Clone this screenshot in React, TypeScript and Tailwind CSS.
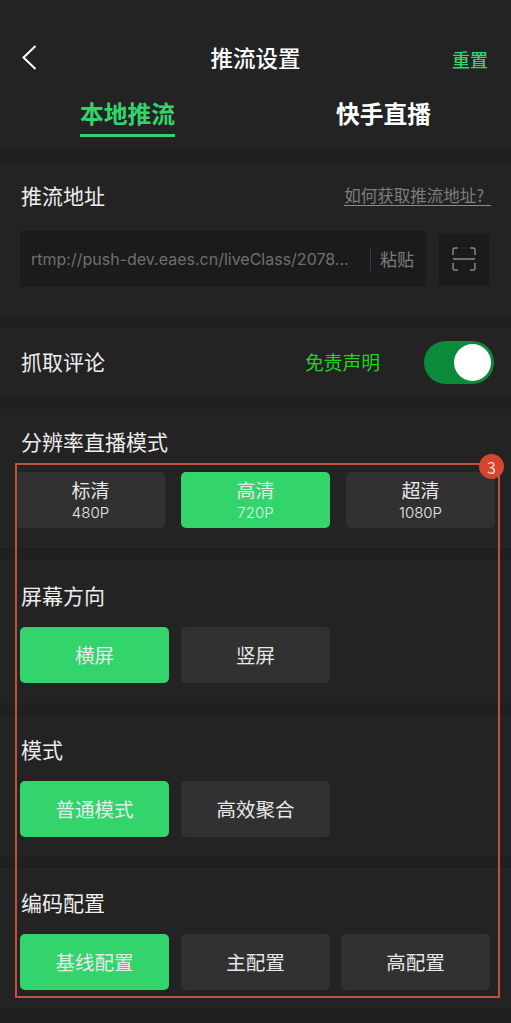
import React from 'react';

const cjk = "font-['Noto_Sans_CJK_SC',sans-serif]";
const latin = "font-['Inter','Noto_Sans_CJK_SC',sans-serif]";

const Opt = ({ label, sub, on, className = '' }: { label: string; sub?: string; on?: boolean; className?: string }) => (
  <div
    className={`flex h-14 w-[149px] flex-col items-center justify-center rounded-[5px] text-[#e8e8e8] ${on ? 'bg-[#33d46c]' : 'bg-[#313131]'} ${className}`}
  >
    <div className={sub ? 'text-[19px] leading-[25px]' : 'text-[19.5px] leading-[26px]'}>{label}</div>
    {sub && <div className={`text-[15px] leading-[22px] font-light ${latin}`}>{sub}</div>}
  </div>
);

const Section = ({ title, height, head, children }: { title: string; height: string; head: string; children: React.ReactNode }) => (
  <section className={`bg-[#232323] ${height}`}>
    <h2 className={`pl-[21px] text-[21px] leading-[28px] font-normal text-[#eeeeee] ${head}`}>{title}</h2>
    {children}
  </section>
);

export default function App() {
  return (
    <div className={`relative flex h-[1023px] w-[511px] flex-col gap-3 overflow-hidden bg-[#202020] ${cjk}`}>
      {/* 顶部 */}
      <header className="h-[150px] shrink-0 bg-[#232323]">
        <div className="relative flex h-[72px] items-end justify-between pl-[22px] pr-[23px]">
          <svg width="15" height="25" viewBox="0 0 15 25" fill="none" stroke="#ffffff" strokeWidth="2" className="mb-[2px]">
            <path d="M13.5 1 L1.5 12.5 L13.5 24" />
          </svg>
          <div className="absolute left-0 right-0 bottom-0 text-center text-[22.5px] leading-[30px] font-medium text-white">推流设置</div>
          <div className="text-[18px] leading-[26px] font-medium text-[#33d46c]">重置</div>
        </div>
        <div className="flex pl-[80px] pt-[23px]">
          <div className="w-[95px] whitespace-nowrap border-b-[3px] border-[#33d46c] pb-[3px] text-[23.75px] leading-[36px] font-bold text-[#33d46c]">本地推流</div>
          <div className="ml-[161px] whitespace-nowrap text-[23.75px] leading-[36px] font-bold text-white">快手直播</div>
        </div>
      </header>

      <section className="h-[153px] shrink-0 bg-[#232323]">
        <div className="flex items-center justify-between pl-[21px] pr-5 pt-[19px]">
          <h2 className="text-[21px] leading-[28px] font-normal text-[#eeeeee]">推流地址</h2>
          <a className="border-b border-[#8a8a8a] pr-[7px] text-[16.5px] leading-[20px] text-[#7d7d7d]">如何获取推流地址?</a>
        </div>
        <div className="mt-[22px] flex items-center pl-5 pr-[22px]">
          <div className="flex h-14 w-[406px] items-center rounded-[2px] bg-[#1b1b1b] pl-[11px]">
            <span className={`w-[339px] whitespace-nowrap text-[16px] text-[#6f6f6f] ${latin}`}>rtmp://push-dev.eaes.cn/liveClass/2078...</span>
            <span className="mr-[9px] h-[23px] w-px bg-[#3a3a3a]" />
            <span className="text-[17px] text-[#7d7d7d]">粘贴</span>
          </div>
          <div className="ml-auto flex h-[51px] w-[50px] items-center justify-center bg-[#1b1b1b]">
            <svg width="24" height="24" viewBox="0 0 24 24" fill="none" stroke="#8a8a8a" strokeWidth="1.4">
              <path d="M1 8V3a2 2 0 0 1 2-2h3M18 1h3a2 2 0 0 1 2 2v5M1 12h22M1 16v5a2 2 0 0 0 2 2h3M18 23h3a2 2 0 0 0 2-2v-5" />
            </svg>
          </div>
        </div>
      </section>

      <section className="flex h-[70px] shrink-0 items-center bg-[#232323] pl-[21px] pr-[17px]">
        <h2 className="text-[21px] font-normal text-[#eeeeee]">抓取评论</h2>
        <span className="ml-auto mr-[44px] text-[18.75px] text-[#1ed41e]">免责声明</span>
        <div className="flex h-[43px] w-[70px] items-center justify-end rounded-full bg-[#0b8a3a] pr-[3px]">
          <div className="h-[37px] w-[37px] rounded-full bg-white" />
        </div>
      </section>

      <Section title="分辨率直播模式" height="h-[139px] shrink-0" head="pt-[18px] pb-[17px]">
        <div className="flex gap-4 pl-4">
          <Opt label="标清" sub="480P" />
          <Opt label="高清" sub="720P" on />
          <Opt label="超清" sub="1080P" />
        </div>
      </Section>

      <Section title="屏幕方向" height="h-[143px] shrink-0" head="pt-[21px] pb-[18px]">
        <div className="flex gap-3 pl-5">
          <Opt label="横屏" on />
          <Opt label="竖屏" />
        </div>
      </Section>

      <Section title="模式" height="h-[141px] shrink-0" head="pt-[20px] pb-[18px]">
        <div className="flex gap-3 pl-5">
          <Opt label="普通模式" on />
          <Opt label="高效聚合" />
        </div>
      </Section>

      <Section title="编码配置" height="h-[140px] shrink-0" head="pt-[20px] pb-[18px]">
        <div className="flex gap-3 pl-5">
          <Opt label="基线配置" on />
          <Opt label="主配置" />
          <Opt label="高配置" className="-ml-[1px]" />
        </div>
      </Section>

      {/* 标注框 */}
      <div className="pointer-events-none absolute left-[15px] top-[463px] h-[535px] w-[485px] border-2 border-solid border-[#c24e3e]" />
      <div className="absolute left-[479px] top-[454px] flex h-[25px] w-[25px] items-center justify-center rounded-full bg-[#d6452f] text-[16px] text-[#f3d9d3]">3</div>
    </div>
  );
}
